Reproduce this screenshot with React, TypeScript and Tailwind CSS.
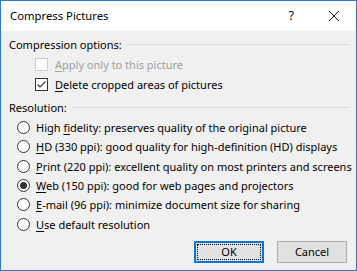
import React from "react";

const font = { fontFamily: '"Segoe UI", "Noto Sans", "Open Sans", sans-serif' };

function U({ children }: { children: React.ReactNode }) {
  return <span className="underline underline-offset-2 decoration-1">{children}</span>;
}

function Check({ checked, disabled, children }: { checked?: boolean; disabled?: boolean; children: React.ReactNode }) {
  return (
    <div className="flex items-center h-[20px] pl-[34px]">
      <div
        className={
          "w-[13px] h-[13px] shrink-0 border flex items-center justify-center " +
          (disabled ? "border-[#cccccc] bg-[#fcfcfc]" : "border-[#333333] bg-white")
        }
      >
        {checked && (
          <svg width="11" height="11" viewBox="0 0 11 11">
            <path d="M1.5 5.5 L4 8 L9.5 2.5" fill="none" stroke="#333" strokeWidth="1.1" />
          </svg>
        )}
      </div>
      <span className={"ml-[7px] whitespace-nowrap " + (disabled ? "text-[#a0a0a0]" : "text-black")}>{children}</span>
    </div>
  );
}

function Radio({ checked, children }: { checked?: boolean; children: React.ReactNode }) {
  return (
    <div className="flex items-center h-[19.3px] pl-[16px]">
      <div className="w-[13px] h-[13px] shrink-0 rounded-full border border-[#333333] bg-white flex items-center justify-center">
        {checked && <div className="w-[7px] h-[7px] rounded-full bg-[#333333]" />}
      </div>
      <span className="ml-[6px] text-black whitespace-nowrap">{children}</span>
    </div>
  );
}

function GroupLabel({ children }: { children: React.ReactNode }) {
  return (
    <div className="flex items-center h-[20px] pl-[8px] pr-[6px]">
      <span className="text-black whitespace-nowrap">{children}</span>
      <div className="flex-1 h-px bg-[#dcdcdc] ml-[5px]" />
    </div>
  );
}

export default function App() {
  return (
    <div
      className="w-[357px] h-[271px] border border-[#2b79d6] bg-[#f0f0f0] flex flex-col text-[11px] leading-none overflow-hidden"
      style={font}
    >
      <div className="h-[30px] bg-white flex items-center shrink-0">
        <span className="ml-[9px] text-[11.3px] text-black">Compress Pictures</span>
        <div className="flex-1" />
        <span className="mr-[34px] text-[12px] text-black">?</span>
        <svg width="12" height="12" viewBox="0 0 12 12" className="mr-[16px]">
          <path d="M1 1 L11 11 M11 1 L1 11" stroke="#111" strokeWidth="1" />
        </svg>
      </div>
      <div className="flex flex-col pt-[3px]">
        <GroupLabel>Compression options:</GroupLabel>
        <Check disabled>
          <U>A</U>pply only to this picture
        </Check>
        <Check checked>
          <U>D</U>elete cropped areas of pictures
        </Check>
        <div className="h-[3px]" />
        <GroupLabel>Resolution:</GroupLabel>
        <div className="h-[1px]" />
        <Radio>
          High <U>f</U>idelity: preserves quality of the original picture
        </Radio>
        <Radio>
          <U>H</U>D (330 ppi): good quality for high-definition (HD) displays
        </Radio>
        <Radio>
          <U>P</U>rint (220 ppi): excellent quality on most printers and screens
        </Radio>
        <Radio checked>
          <U>W</U>eb (150 ppi): good for web pages and projectors
        </Radio>
        <Radio>
          <U>E</U>-mail (96 ppi): minimize document size for sharing
        </Radio>
        <Radio>
          <U>U</U>se default resolution
        </Radio>
        <div className="flex justify-end gap-[13px] pr-[9px] mt-[7px]">
          <button className="w-[70px] h-[22px] bg-[#e1e1e1] border-2 border-[#0078d7] p-[1px] text-black">
            <div className="w-full h-full border border-dotted border-black flex items-center justify-center">OK</div>
          </button>
          <button className="w-[70px] h-[22px] bg-[#e1e1e1] border border-[#adadad] text-black flex items-center justify-center">
            Cancel
          </button>
        </div>
      </div>
    </div>
  );
}
